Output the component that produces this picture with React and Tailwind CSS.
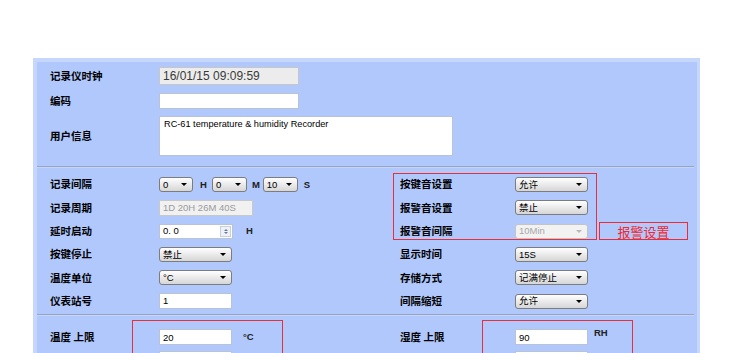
import React from 'react';

const cjk = "font-['Noto_Sans_CJK_SC',sans-serif]";

function Label({ children, w = 'w-[109px]' }) {
  return <div className={`${w} shrink-0 text-[10.5px] font-bold text-black leading-none ${cjk}`}>{children}</div>;
}

function Arrow({ disabled }) {
  return (
    <span
      className={`ml-auto mr-[5px] w-0 h-0 border-l-[3px] border-r-[3px] border-t-[3px] border-l-transparent border-r-transparent ${disabled ? 'border-t-[#b8b8b8]' : 'border-t-black'}`}
    />
  );
}

function Select({ value, w, disabled }) {
  return (
    <div
      className={`${w} h-[15px] flex items-center rounded-[3px] border pl-[3px] text-[9.5px] leading-none ${
        disabled
          ? 'border-[#c4c4c4] bg-[#f2f2f2] text-[#a8a8a8]'
          : 'border-[#7c7c7c] bg-linear-to-b from-white to-[#d6d6d6] text-black'
      } font-['Liberation_Sans','Noto_Sans_CJK_SC',sans-serif]`}
    >
      <span>{value}</span>
      <Arrow disabled={disabled} />
    </div>
  );
}

function Input({ value, w, h = 'h-[15px]', cls = 'bg-white border-[#b9c3d6] text-black' }) {
  return (
    <div className={`${w} ${h} flex items-center border pl-[3px] text-[9.5px] leading-none ${cls}`}>{value}</div>
  );
}

function Unit({ children, cls = '' }) {
  return <span className={`text-[9.5px] font-bold text-[#202020] leading-none ${cls}`}>{children}</span>;
}

function Row({ children }) {
  return <div className="flex items-center h-[23.3px]">{children}</div>;
}

function Sep() {
  return <div className="mr-[3px] h-[2px] border-t border-[#98a4be] border-b border-b-[#c4d4fb]" />;
}

export default function App() {
  return (
    <div className="w-[750px] h-[353px] overflow-hidden bg-white pt-[58px] pl-[33px] font-['Liberation_Sans','Noto_Sans_CJK_SC',sans-serif]">
      <div className="w-[667px] border-[4px] border-[#c6d6fc] bg-[#b0c8fc] border-r-[3px]">
        {/* device info */}
        <div className="pl-[13px] pt-[5px] pb-[10px]">
          <div className="flex items-center h-[18px]">
            <Label>记录仪时钟</Label>
            <Input value="16/01/15 09:09:59" w="w-[140px]" h="h-[18px]" cls="bg-[#ececec] border-[#c6c6c6] text-[#3a3a3a] text-[12px]" />
          </div>
          <div className="flex items-center h-[16px] mt-[8px]">
            <Label>编码</Label>
            <Input value="" w="w-[140px]" h="h-[16px]" />
          </div>
          <div className="flex items-center h-[40px] mt-[7px]">
            <Label>用户信息</Label>
            <div className="w-[294px] h-[40px] bg-white border border-[#b9c3d6] pl-[4px] pt-[2px] text-[9.2px] leading-[11px] text-black">
              RC-61 temperature &amp; humidity Recorder
            </div>
          </div>
        </div>
        <Sep />

        {/* record settings */}
        <div className="flex pl-[13px] pt-[5px] pb-[1px]">
          <div className="w-[350px] shrink-0">
            <Row>
              <Label>记录间隔</Label>
              <div className="flex items-center">
                <Select value="0" w="w-[34px]" />
                <Unit cls="ml-[7px] mr-[5px]">H</Unit>
                <Select value="0" w="w-[35px]" />
                <Unit cls="ml-[5px] mr-[3px]">M</Unit>
                <Select value="10" w="w-[35px]" />
                <Unit cls="ml-[6px]">S</Unit>
              </div>
            </Row>
            <Row>
              <Label>记录周期</Label>
              <Input value="1D 20H 26M 40S" w="w-[94px]" h="h-[16px]" cls="bg-[#f1f1f1] border-[#c8c8c8] text-[#9a9a9a]" />
            </Row>
            <Row>
              <Label>延时启动</Label>
              <div className="w-[74px] h-[15px] flex items-center bg-white border border-[#b9c3d6] pl-[3px] text-[9.5px] leading-none">
                <span>0. 0</span>
                <div className="ml-auto mr-[1px] w-[11px] h-[11px] flex flex-col items-center justify-center gap-[1px] border border-[#c8d0dc] bg-[#eef2f8]">
                  <span className="w-0 h-0 border-l-[2px] border-r-[2px] border-b-[2px] border-l-transparent border-r-transparent border-b-[#6a7a9a]" />
                  <span className="w-0 h-0 border-l-[2px] border-r-[2px] border-t-[2px] border-l-transparent border-r-transparent border-t-[#6a7a9a]" />
                </div>
              </div>
              <Unit cls="ml-[13px]">H</Unit>
            </Row>
            <Row>
              <Label>按键停止</Label>
              <Select value="禁止" w="w-[73px]" />
            </Row>
            <Row>
              <Label>温度单位</Label>
              <Select value="°C" w="w-[73px]" />
            </Row>
            <Row>
              <Label>仪表站号</Label>
              <Input value="1" w="w-[73px]" h="h-[16px]" />
            </Row>
          </div>

          <div className="relative">
            <Row>
              <Label w="w-[115px]">按键音设置</Label>
              <Select value="允许" w="w-[73px]" />
            </Row>
            <Row>
              <Label w="w-[115px]">报警音设置</Label>
              <Select value="禁止" w="w-[73px]" />
            </Row>
            <Row>
              <Label w="w-[115px]">报警音间隔</Label>
              <Select value="10Min" w="w-[73px]" disabled />
            </Row>
            <Row>
              <Label w="w-[115px]">显示时间</Label>
              <Select value="15S" w="w-[73px]" />
            </Row>
            <Row>
              <Label w="w-[115px]">存储方式</Label>
              <Select value="记满停止" w="w-[73px]" />
            </Row>
            <Row>
              <Label w="w-[115px]">间隔缩短</Label>
              <Select value="允许" w="w-[73px]" />
            </Row>

            <div className="absolute left-[-7px] top-0 w-[204px] h-[67px] border border-[#e8303a] pointer-events-none" />
            <div className={`absolute left-[199px] top-[49px] w-[89px] h-[18px] border border-[#ee2a32] flex items-center justify-center text-[13px] leading-none text-[#f0282e] ${cjk}`}>
              报警设置
            </div>
          </div>
        </div>
        <Sep />

        {/* alarm limits */}
        <div className="flex pl-[13px] pt-[13px]">
          <div className="relative w-[350px] shrink-0">
            <div className="flex items-center h-[17px]">
              <Label>温度 上限</Label>
              <Input value="20" w="w-[73px]" h="h-[16px]" />
              <Unit cls="ml-[11px] self-start mt-[3px]">°C</Unit>
            </div>
            <div className="flex items-center h-[17px] mt-[5px]">
              <div className="w-[109px] shrink-0" />
              <Input value="" w="w-[73px]" h="h-[16px]" />
            </div>
            <div className="absolute left-[82px] top-[-9px] w-[151px] h-[60px] border border-[#e8303a]" />
          </div>
          <div className="relative">
            <div className="flex items-center h-[17px]">
              <Label w="w-[115px]">湿度 上限</Label>
              <Input value="90" w="w-[73px]" h="h-[16px]" />
              <Unit cls="ml-[6px] self-start mt-[-1px]">RH</Unit>
            </div>
            <div className="flex items-center h-[17px] mt-[5px]">
              <div className="w-[115px] shrink-0" />
              <Input value="" w="w-[73px]" h="h-[16px]" />
            </div>
            <div className="absolute left-[82px] top-[-9px] w-[151px] h-[60px] border border-[#e8303a]" />
          </div>
        </div>
      </div>
    </div>
  );
}
